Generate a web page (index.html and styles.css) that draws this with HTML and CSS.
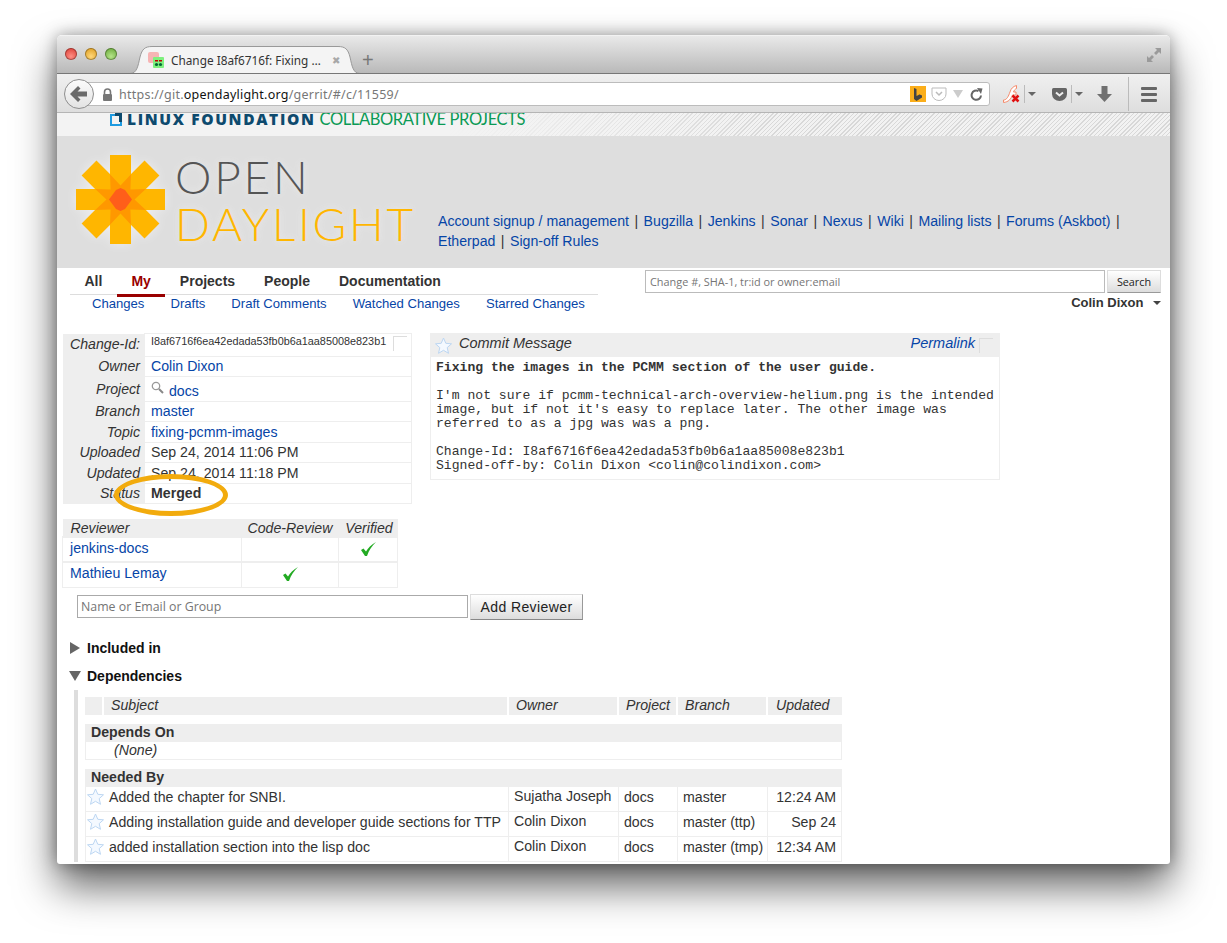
FILE: index.html
```html
<!DOCTYPE html>
<html>
<head>
  <meta charset="UTF-8">
  <title>Change I8af6716f: Fixing the images</title>
  <link rel="stylesheet" href="styles.css">
</head>
<body>
<div class="window">
  <div class="tabbar">
    <div class="lights">
      <span class="light red"></span>
      <span class="light amber"></span>
      <span class="light green"></span>
    </div>
    <div class="tab">
      <svg class="tab-shape" width="230" height="28" viewBox="0 0 230 28">
        <path d="M0 27.500C7 27.500 8 20 10 11C12 3 15 .5 22 .5H208C215 .5 218 3 220 11C222 20 223 27.500 230 27.500" fill="#f4f4f4" stroke="#999"/>
      </svg>
      <svg class="favicon" width="16" height="16" viewBox="0 0 16 16">
        <rect x="0" y="0" width="11" height="11" rx="2" fill="#f7b4b4"/>
        <rect x="5" y="5" width="11" height="11" rx="1" fill="#7ef07e"/>
        <rect x="7" y="8" width="3" height="1.500" fill="#b00"/>
        <rect x="11" y="8" width="3" height="1.500" fill="#b00"/>
        <circle cx="8.500" cy="12.500" r="1.600" fill="#063"/>
        <circle cx="12.500" cy="12.500" r="1.600" fill="#063"/>
      </svg>
      <span class="tab-title">Change I8af6716f: Fixing …</span>
      <span class="tab-close">✖</span>
    </div>
    <span class="new-tab">+</span>
    <svg class="fullscreen" width="16" height="16" viewBox="0 0 16 16" fill="#9a9a9a">
      <path d="M9 1h6v6l-2-2-3 3-2-2 3-3zM7 15H1V9l2 2 3-3 2 2-3 3z"/>
    </svg>
  </div>

  <div class="toolbar">
    <div class="urlbar">
      <div class="back-btn">
        <svg width="18" height="16" viewBox="0 0 18 16"><path d="M8 0l2.500 2.500L7.500 5.500H17v5H7.500l3 3L8 16 0 8z" fill="#6a6a6a"/></svg>
      </div>
      <svg class="lock" width="11" height="13" viewBox="0 0 11 13">
        <path d="M2.500 6V4a3 3 0 0 1 6 0v2" fill="none" stroke="#777" stroke-width="1.600"/>
        <rect x="1" y="6" width="9" height="7" rx="1" fill="#777"/>
      </svg>
      <span class="url">https://git.<b>opendaylight.org</b>/gerrit/#/c/11559/</span>
      <span class="bing"><svg width="10" height="13" viewBox="0 0 10 13"><path d="M1 0l2.500 1v7l3-1.500L4.500 5.500 9 7.500v2L3.500 13 1 11z" fill="#444"/></svg></span>
      <svg class="url-pocket" width="16" height="14" viewBox="0 0 16 14">
        <path d="M1 1h14v6a7 6.500 0 0 1-14 0z" fill="#fff" stroke="#bbb"/>
        <path d="M5 5l3 3 3-3" fill="none" stroke="#bbb" stroke-width="1.500"/>
      </svg>
      <span class="url-drop"></span>
      <svg class="reload" width="13" height="13" viewBox="0 0 13 13">
        <path d="M11 7.500A4.700 4.700 0 1 1 8.500 3" fill="none" stroke="#666" stroke-width="2"/>
        <path d="M7 0l5.500 0.500L11 6z" fill="#666"/>
      </svg>
    </div>
    <svg class="flash" width="17" height="18" viewBox="0 0 17 18">
      <path d="M.5 15C4 15 5.500 11 7 7C8 3.500 10 1.500 13.500.5V3.500C12 4 11 5.500 10.500 7H13V10H9.500C8 14 5.500 17 .5 17.500z" fill="#fff" stroke="#f58a6a"/>
      <path d="M9.500 10.500l6 6M15.500 10.500l-6 6" stroke="#e01010" stroke-width="2.500"/>
    </svg>
    <span class="tool-sep sep-flash"></span>
    <span class="tool-drop"></span>
    <svg class="pocket" width="15" height="13" viewBox="0 0 15 13">
      <path d="M0 1.500Q0 0 1.500 0h12Q15 0 15 1.500V6a7.500 7 0 0 1-15 0z" fill="#666"/>
      <path d="M4 4.500l3.500 3 3.500-3" fill="none" stroke="#eee" stroke-width="2"/>
    </svg>
    <span class="tool-sep sep-pocket"></span>
    <span class="tool-drop"></span>
    <svg class="download" width="15" height="16" viewBox="0 0 15 16">
      <path d="M4.500 0h6v8H15l-7.500 8L0 8h4.500z" fill="#707070"/>
    </svg>
    <span class="tool-sep sep-menu"></span>
    <div class="hamburger"><span></span><span></span><span></span></div>
  </div>

  <div class="page">
    <div class="lf-bar">
      <svg class="lf-mark" width="12" height="13" viewBox="0 0 12 13">
        <path d="M1 2h10v10H1z" fill="none" stroke="#1d9ae0" stroke-width="2"/>
        <path d="M5 0h7v9H9V3H5z" fill="#0d4a6e"/>
      </svg>
      <span class="lf-name">LINUX FOUNDATION</span>
      <span class="lf-collab">COLLABORATIVE PROJECTS</span>
    </div>

    <div class="site-header">
      <svg class="odl-star" width="90" height="90" viewBox="0 0 90 90">
        <g fill="#ffb600">
          <rect x="34" y="0" width="21" height="89"/>
          <rect x="0" y="34" width="89" height="21"/>
          <rect x="34" y="0" width="21" height="89" transform="rotate(45 44.500 44.500)"/>
          <rect x="34" y="0" width="21" height="89" transform="rotate(-45 44.500 44.500)"/>
        </g>
        <path d="M58.500 44.500L69.800 55 54.400 54.400 55 69.800 44.500 58.500 34 69.800 34.600 54.400 19.200 55 30.500 44.500 19.200 34 34.600 34.600 34 19.200 44.500 30.500 55 19.200 54.400 34.600 69.800 34z" fill="#ff9800"/>
        <path d="M56 44.500L49 35 44.500 33 40 35 33 44.500 40 54 44.500 56 49 54z" fill="#ff5e1a"/>
      </svg>
      <div class="odl-words">
        <div class="odl-open">OPEN</div>
        <div class="odl-day">DAYLIGHT</div>
      </div>
      <div class="site-links">
        <a href="#">Account signup / management</a> <i>|</i>
        <a href="#">Bugzilla</a> <i>|</i>
        <a href="#">Jenkins</a> <i>|</i>
        <a href="#">Sonar</a> <i>|</i>
        <a href="#">Nexus</a> <i>|</i>
        <a href="#">Wiki</a> <i>|</i>
        <a href="#">Mailing lists</a> <i>|</i>
        <a href="#">Forums (Askbot)</a> <i>|</i>
        <a href="#">Etherpad</a> <i>|</i>
        <a href="#">Sign-off Rules</a>
      </div>
    </div>

    <div class="nav-row">
      <div class="nav-left">
        <div class="menu">
          <span class="menu-item">All</span>
          <span class="menu-item active">My</span>
          <span class="menu-item">Projects</span>
          <span class="menu-item">People</span>
          <span class="menu-item">Documentation</span>
        </div>
        <div class="submenu">
          <a href="#">Changes</a>
          <a href="#">Drafts</a>
          <a href="#">Draft Comments</a>
          <a href="#">Watched Changes</a>
          <a href="#">Starred Changes</a>
        </div>
      </div>
      <div class="nav-right">
        <div class="search">
          <input class="search-input" placeholder="Change #, SHA-1, tr:id or owner:email">
          <button class="search-btn">Search</button>
        </div>
        <div class="user">Colin Dixon <span class="user-drop"></span></div>
      </div>
    </div>

    <div class="change-top">
      <div class="change-left">
        <table class="info">
          <tr class="r-id"><th>Change-Id:</th><td><div class="id-cell"><span class="change-id">I8af6716f6ea42edada53fb0b6a1aa85008e823b1</span><span class="copy"></span></div></td></tr>
          <tr class="r-20"><th>Owner</th><td><a href="#">Colin Dixon</a></td></tr>
          <tr class="r-25"><th>Project</th><td>
            <svg class="search-ico" width="13" height="13" viewBox="0 0 13 13"><circle cx="5" cy="5" r="3.700" fill="#fff" stroke="#999" stroke-width="1.300"/><path d="M8 8l4 4" stroke="#888" stroke-width="2"/></svg>
            <a class="project-link" href="#">docs</a></td></tr>
          <tr class="r-20"><th>Branch</th><td><a href="#">master</a></td></tr>
          <tr class="r-21"><th>Topic</th><td><a href="#">fixing-pcmm-images</a></td></tr>
          <tr class="r-20"><th>Uploaded</th><td>Sep 24, 2014 11:06 PM</td></tr>
          <tr class="r-21"><th>Updated</th><td>Sep 24, 2014 11:18 PM</td></tr>
          <tr class="r-20"><th>Status</th><td><b>Merged</b></td></tr>
        </table>

        <table class="reviewers">
          <tr><th class="rv-name">Reviewer</th><th class="rv-code">Code-Review</th><th class="rv-ver">Verified</th></tr>
          <tr><td><a href="#">jenkins-docs</a></td><td></td><td class="tick"><svg width="15" height="14" viewBox="0 0 15 14"><path d="M0 8l2.500-1.500L5 9.500C7 6 10 3 15 0 11 4 8 8 6 14H4z" fill="#22aa22"/></svg></td></tr>
          <tr><td><a href="#">Mathieu Lemay</a></td><td class="tick"><svg width="15" height="14" viewBox="0 0 15 14"><path d="M0 8l2.500-1.500L5 9.500C7 6 10 3 15 0 11 4 8 8 6 14H4z" fill="#22aa22"/></svg></td><td></td></tr>
        </table>
      </div>

      <div class="commit">
        <div class="commit-head">
          <svg class="star" width="17" height="18" viewBox="0 0 17 18"><path d="M8.500 1l2.300 5.300 5.700.5-4.300 3.800 1.300 5.700-5-3-5 3 1.300-5.700L.5 6.800l5.700-.5z" fill="#f4f9ff" stroke="#bcd6f2"/></svg>
          <span class="commit-title">Commit Message</span>
          <a class="permalink" href="#">Permalink</a>
          <span class="copy"></span>
        </div>
        <pre class="commit-text"><b>Fixing the images in the PCMM section of the user guide.</b>

I'm not sure if pcmm-technical-arch-overview-helium.png is the intended
image, but if not it's easy to replace later. The other image was
referred to as a jpg was was a png.

Change-Id: I8af6716f6ea42edada53fb0b6a1aa85008e823b1
Signed-off-by: Colin Dixon &lt;colin@colindixon.com&gt;</pre>
      </div>
    </div>

    <div class="add-reviewer">
      <input class="reviewer-input" placeholder="Name or Email or Group">
      <button class="reviewer-btn">Add Reviewer</button>
    </div>

    <div class="section-head closed"><span class="tri-right"></span>Included in</div>
    <div class="section-head open"><span class="tri-down"></span>Dependencies</div>

    <div class="deps">
      <table class="deps-table">
        <tr class="deps-cols">
          <th class="c-star"></th><th class="c-subject">Subject</th><th class="c-owner">Owner</th><th class="c-project">Project</th><th class="c-branch">Branch</th><th class="c-updated">Updated</th>
        </tr>
        <tr class="spacer"><td colspan="6"></td></tr>
        <tr class="deps-group"><td colspan="6">Depends On</td></tr>
        <tr class="deps-none"><td colspan="6"><em>(None)</em></td></tr>
        <tr class="spacer"><td colspan="6"></td></tr>
        <tr class="deps-group"><td colspan="6">Needed By</td></tr>
        <tr class="deps-row">
          <td class="c-star"><svg class="star" width="17" height="18" viewBox="0 0 17 18"><path d="M8.500 1l2.300 5.300 5.700.5-4.300 3.800 1.300 5.700-5-3-5 3 1.300-5.700L.5 6.800l5.700-.5z" fill="#f4f9ff" stroke="#bcd6f2"/></svg></td>
          <td>Added the chapter for SNBI.</td><td class="owner">Sujatha Joseph</td><td>docs</td><td>master</td><td class="when">12:24 AM</td>
        </tr>
        <tr class="deps-row">
          <td class="c-star"><svg class="star" width="17" height="18" viewBox="0 0 17 18"><path d="M8.500 1l2.300 5.300 5.700.5-4.300 3.800 1.300 5.700-5-3-5 3 1.300-5.700L.5 6.800l5.700-.5z" fill="#f4f9ff" stroke="#bcd6f2"/></svg></td>
          <td>Adding installation guide and developer guide sections for TTP</td><td class="owner">Colin Dixon</td><td>docs</td><td>master (ttp)</td><td class="when">Sep 24</td>
        </tr>
        <tr class="deps-row">
          <td class="c-star"><svg class="star" width="17" height="18" viewBox="0 0 17 18"><path d="M8.500 1l2.300 5.300 5.700.5-4.300 3.800 1.300 5.700-5-3-5 3 1.300-5.700L.5 6.800l5.700-.5z" fill="#f4f9ff" stroke="#bcd6f2"/></svg></td>
          <td>added installation section into the lisp doc</td><td class="owner">Colin Dixon</td><td>docs</td><td>master (tmp)</td><td class="when">12:34 AM</td>
        </tr>
      </table>
    </div>

    <div class="callout"></div>
  </div>
</div>
</body>
</html>
```

FILE: styles.css
```css
html, body {
  margin: 0;
  height: 943px;
  overflow: hidden;
  background: #fff;
}
body {
  padding: 35px 0 0 57px;
  box-sizing: border-box;
  font-family: "Liberation Sans", Arial, sans-serif;
  font-size: 14.15px;
  color: #333;
}
a {
  color: #0645a7;
  text-decoration: none;
}

.window {
  position: relative;
  width: 1113px;
  height: 829px;
  display: flex;
  flex-direction: column;
  overflow: hidden;
  border-radius: 5px 5px 3px 3px;
  background: #fff;
  box-shadow: 0 22px 42px rgba(0, 0, 0, .62), 0 0 16px rgba(0, 0, 0, .35);
}

/* title bar with tabs */
.tabbar {
  position: relative;
  height: 38px;
  flex: none;
  display: flex;
  align-items: flex-end;
  box-sizing: border-box;
  border-top: 1px solid #f2f2f2;
  background: linear-gradient(#e9e9e9, #b9b9b9);
}
.lights {
  display: flex;
  gap: 8px;
  margin: 0 0 13px 8px;
}
.light {
  width: 12px;
  height: 12px;
  border-radius: 50%;
  box-shadow: inset 0 0 0 1px rgba(0, 0, 0, .3);
}
.red { background: radial-gradient(circle at 50% 70%, #ff8f85, #d8322a); }
.amber { background: radial-gradient(circle at 50% 70%, #ffd77a, #d99512); }
.green { background: radial-gradient(circle at 50% 70%, #b6e58a, #5ea02e); }
.tab {
  position: relative;
  width: 230px;
  height: 27px;
  margin-left: 13px;
  display: flex;
  align-items: center;
  font-family: "Noto Sans", sans-serif;
  font-size: 11.8px;
  color: #333;
}
.tab-shape {
  position: absolute;
  left: 0;
  top: 0;
}
.favicon {
  position: relative;
  margin-left: 18px;
  flex: none;
}
.tab-title {
  position: relative;
  margin-left: 7px;
  white-space: nowrap;
  width: 155px;
}
.tab-close {
  position: relative;
  margin-left: 6px;
  font-size: 10px;
  color: #a8a8a8;
}
.new-tab {
  margin: 0 0 3px 2px;
  font-size: 20px;
  line-height: 20px;
  color: #777;
}
.fullscreen {
  position: absolute;
  right: 8px;
  top: 11px;
}

/* navigation toolbar */
.toolbar {
  position: relative;
  height: 40px;
  flex: none;
  display: flex;
  align-items: center;
  box-sizing: border-box;
  padding-top: 2px;
  border-top: 1px solid #777;
  border-bottom: 1px solid #b5b5b5;
  background: linear-gradient(#f0f0f0, #dedede);
}
.urlbar {
  position: relative;
  width: 912px;
  height: 24px;
  margin-left: 21px;
  display: flex;
  align-items: center;
  box-sizing: border-box;
  border: 1px solid #bcbcbc;
  border-radius: 3px;
  background: #fff;
}
.back-btn {
  position: absolute;
  left: -15px;
  top: -4px;
  width: 30px;
  height: 30px;
  display: flex;
  align-items: center;
  justify-content: center;
  box-sizing: border-box;
  border: 1px solid #8e8e8e;
  border-radius: 50%;
  background: linear-gradient(#fbfbfb, #e3e3e3);
}
.lock {
  margin-left: 23px;
  flex: none;
}
.url {
  margin-left: 6px;
  width: 791px;
  font-family: "Noto Sans", sans-serif;
  font-size: 12.5px;
  letter-spacing: .24px;
  color: #777;
  white-space: nowrap;
}
.url b {
  font-weight: normal;
  color: #111;
}
.bing {
  width: 16px;
  height: 16px;
  flex: none;
  display: flex;
  align-items: center;
  justify-content: center;
  background: #fbae1a;
}
.url-pocket {
  margin-left: 5px;
  flex: none;
}
.url-drop {
  margin-left: 6px;
  border-left: 5px solid transparent;
  border-right: 5px solid transparent;
  border-top: 8px solid #ccc;
}
.reload {
  margin-left: 7px;
  flex: none;
}
.flash {
  margin-left: 13px;
}
.tool-sep {
  width: 1px;
  height: 18px;
  background: #bbb;
}
.sep-flash { margin-left: 4px; }
.sep-pocket { margin-left: 4px; }
.sep-menu {
  height: 34px;
  margin-left: 16px;
}
.tool-drop {
  margin-left: 3px;
  border-left: 4px solid transparent;
  border-right: 4px solid transparent;
  border-top: 4px solid #666;
}
.pocket {
  margin-left: 16px;
}
.download {
  margin-left: 14px;
}
.hamburger {
  margin-left: 12px;
  width: 16px;
  display: flex;
  flex-direction: column;
  gap: 3px;
}
.hamburger span {
  height: 3px;
  border-radius: 1px;
  background: #666;
}

/* page */
.page {
  position: relative;
  flex: 1;
  min-height: 0;
  overflow: hidden;
}
.lf-bar {
  height: 23px;
  display: flex;
  align-items: flex-start;
  box-sizing: border-box;
  padding-left: 53px;
  background:
    linear-gradient(90deg, #f3f3f3 35%, rgba(243, 243, 243, 0) 65%),
    repeating-linear-gradient(135deg, #f2f2f2 0, #f2f2f2 2px, #d8d8d8 2px, #d8d8d8 3px);
  line-height: 13px;
  white-space: nowrap;
}
.lf-mark {
  flex: none;
}
.lf-name {
  margin-left: 5px;
  font-family: "Open Sans", sans-serif;
  font-size: 15.5px;
  font-weight: 800;
  letter-spacing: 1.65px;
  color: #0d4a6e;
}
.lf-collab {
  margin-left: 4px;
  font-family: "Lato", sans-serif;
  font-size: 16.5px;
  letter-spacing: -.4px;
  color: #0a9a55;
}
.site-header {
  height: 132px;
  display: flex;
  align-items: flex-start;
  background: #dedede;
}
.odl-star {
  flex: none;
  margin: 19px 0 0 19px;
  filter: drop-shadow(0 0 6px #eee);
}
.odl-words {
  flex: none;
  width: 261px;
  margin: 17px 0 0 9px;
  font-family: "Lato", sans-serif;
  font-weight: 300;
  font-size: 46px;
  line-height: 47px;
  text-shadow: 0 0 7px #eee;
}
.odl-open {
  color: #555;
  letter-spacing: 2.8px;
}
.odl-day {
  color: #ffb600;
  letter-spacing: 2.7px;
}
.site-links {
  width: 700px;
  margin: 75px 0 0 2px;
  line-height: 20px;
  color: #333;
}
.site-links i {
  font-style: normal;
  margin: 0 1.5px;
}

.nav-row {
  height: 65px;
  display: flex;
}
.nav-left {
  width: 528px;
  margin-left: 13px;
  flex: none;
}
.menu {
  display: flex;
  height: 27px;
  box-sizing: border-box;
  border-bottom: 1px solid #ddd;
  font-size: 14px;
  font-weight: bold;
  color: #333;
}
.menu-item {
  padding: 5px 14.5px 0;
}
.active {
  height: 21px;
  color: #900;
  border-bottom: 3px solid #900;
}
.submenu {
  display: flex;
  gap: 26px;
  padding: 1px 0 0 22px;
  font-size: 13.1px;
  line-height: 16px;
  white-space: nowrap;
}
.nav-right {
  width: 516px;
  margin-left: 47px;
  flex: none;
}
.search {
  display: flex;
  gap: 2px;
  margin-top: 2px;
}
.search-input {
  width: 460px;
  height: 23px;
  box-sizing: border-box;
  padding: 0 4px;
  border: 1px solid #bbb;
  font-family: "Open Sans", sans-serif;
  font-size: 10.9px;
}
.search-btn {
  width: 54px;
  height: 23px;
  padding: 0;
  border: 1px solid #ddd;
  border-bottom-color: #999;
  background: linear-gradient(#fff, #ddd);
  font-family: "Open Sans", sans-serif;
  font-size: 10.8px;
  color: #222;
}
.user {
  margin-top: 2px;
  text-align: right;
  font-size: 13px;
  font-weight: bold;
  color: #333;
}
.user-drop {
  display: inline-block;
  margin: 0 0 2px 6px;
  border-left: 4px solid transparent;
  border-right: 4px solid transparent;
  border-top: 4px solid #444;
}

/* change info and commit message */
.change-top {
  display: flex;
  margin-left: 6px;
}
.change-left {
  width: 367px;
  flex: none;
}
table {
  border-collapse: collapse;
  font-size: 14.15px;
}
.info {
  width: 349px;
}
.info th {
  width: 73px;
  padding: 0 4px 1px;
  background: #eee;
  font-weight: normal;
  font-style: italic;
  text-align: right;
  border-bottom: 1px solid #eee;
}
.info td {
  padding: 0 6px 1px;
  border: 1px solid #eee;
  white-space: nowrap;
}
.r-id { height: 23px; }
.r-20 { height: 20px; }
.r-21 { height: 21px; }
.r-25 { height: 25px; }
.id-cell {
  display: flex;
  justify-content: space-between;
  align-items: flex-start;
  height: 21px;
  margin-right: -2px;
}
.change-id {
  font-size: 10.85px;
  line-height: 14px;
}
.copy {
  width: 14px;
  height: 15px;
  margin-top: 2px;
  box-sizing: border-box;
  border-top: 1px solid #ddd;
  border-left: 1px solid #ddd;
}
.search-ico {
  margin-right: 1px;
}
.project-link {
  position: relative;
  top: 2px;
}
.reviewers {
  width: 336px;
  margin: 15px 0 0 -1px;
}
.reviewers th {
  height: 17px;
  padding: 0;
  background: #eee;
  font-weight: normal;
  font-style: italic;
}
.reviewers td {
  height: 25px;
  box-sizing: border-box;
  padding: 0 7px 3px;
  border: 1px solid #eee;
  border-width: 2px 1px 1px;
}
.rv-name {
  width: 179px;
  text-align: left;
  padding-left: 8px !important;
  box-sizing: border-box;
}
.rv-code { width: 97px; }
.rv-ver { padding-left: 2px !important; }
.tick { text-align: center; }
.tick svg { display: block; margin: 1px auto 0; }

.commit {
  width: 570px;
  box-sizing: border-box;
  height: 147px;
  border: 1px solid #eee;
}
.commit-head {
  height: 23px;
  display: flex;
  align-items: center;
  background: #eee;
  font-size: 14.5px;
  font-style: italic;
}
.commit-head .star {
  margin: 0 0 0 4px;
}
.commit-title {
  margin-left: 7px;
  flex: 1;
  padding-bottom: 6px;
}
.permalink {
  margin-right: 4px;
  padding-bottom: 6px;
}
.commit-head .copy {
  margin: 0 6px 0 0;
  height: 15px;
}
.commit-text {
  margin: 4px 0 0 5px;
  font-family: "Liberation Mono", "Courier New", monospace;
  font-size: 13.1px;
  line-height: 14px;
  color: #333;
}

.add-reviewer {
  display: flex;
  align-items: center;
  gap: 2px;
  margin: 6px 0 0 20px;
}
.reviewer-input {
  width: 391px;
  height: 23px;
  box-sizing: border-box;
  padding: 0 3px;
  border: 1px solid #aaa;
  font-family: "Open Sans", sans-serif;
  font-size: 12.35px;
}
.reviewer-btn {
  width: 113px;
  height: 26px;
  padding: 0;
  border: 1px solid #ddd;
  border-bottom-color: #888;
  border-right-color: #999;
  background: linear-gradient(#fff, #ddd);
  font-family: "Liberation Sans", sans-serif;
  font-size: 14px;
  letter-spacing: .4px;
  color: #222;
}

.section-head {
  display: flex;
  align-items: center;
  height: 28px;
  margin-left: 13px;
  font-size: 14px;
  font-weight: bold;
  color: #111;
}
.closed { margin-top: 14px; }
.tri-right {
  width: 0;
  height: 0;
  margin-right: 7px;
  border-top: 6px solid transparent;
  border-bottom: 6px solid transparent;
  border-left: 10px solid #666;
}
.tri-down {
  width: 0;
  height: 0;
  margin: 0 6px 0 -1px;
  border-left: 6px solid transparent;
  border-right: 6px solid transparent;
  border-top: 10px solid #666;
}

.deps {
  margin: 0 0 0 17px;
  padding: 7px 0 0 7px;
  border-left: 4px solid #ddd;
}
.deps-table {
  width: 757px;
  table-layout: fixed;
  border-collapse: separate;
  border-spacing: 0;
}
.c-star { width: 19px; }
.c-subject { width: 405px; }
.c-owner { width: 110px; }
.c-project { width: 59px; }
.c-branch { width: 90px; }
.deps-cols th {
  height: 18px;
  padding: 0 7px 2px;
  background: #eee;
  border-right: 2px solid #fff;
  font-weight: normal;
  font-style: italic;
  text-align: left;
  box-sizing: border-box;
}
.deps-cols th:last-child { border-right: 0; padding-left: 8px; }
.spacer td { height: 9px; padding: 0; }
.deps-group td {
  height: 18px;
  box-sizing: border-box;
  padding: 0 6px 2px;
  background: #eee;
  font-weight: bold;
  color: #333;
}
.deps-none td {
  height: 18px;
  box-sizing: border-box;
  padding: 0 28px 1px;
  border: 1px solid #eee;
  border-width: 0 1px 1px;
}
.deps-row td {
  height: 25px;
  box-sizing: border-box;
  padding: 0 5px 4px;
  border-bottom: 1px solid #eee;
  border-right: 1px solid #eee;
  white-space: nowrap;
}
.deps-row td.c-star {
  padding: 0 0 4px;
  border-right: 0;
  text-align: center;
  border-left: 1px solid #eee;
}
.deps-row td.c-star svg { display: block; margin: 0 0 0 1px; }
.deps-row .owner { padding-bottom: 6px; }
.when { text-align: right; }

/* annotation drawn on top of the screenshot */
.callout {
  position: absolute;
  left: 57px;
  top: 361px;
  width: 114px;
  height: 42px;
  box-sizing: border-box;
  border: 5px solid #f2ab0d;
  border-radius: 50%;
}
```
